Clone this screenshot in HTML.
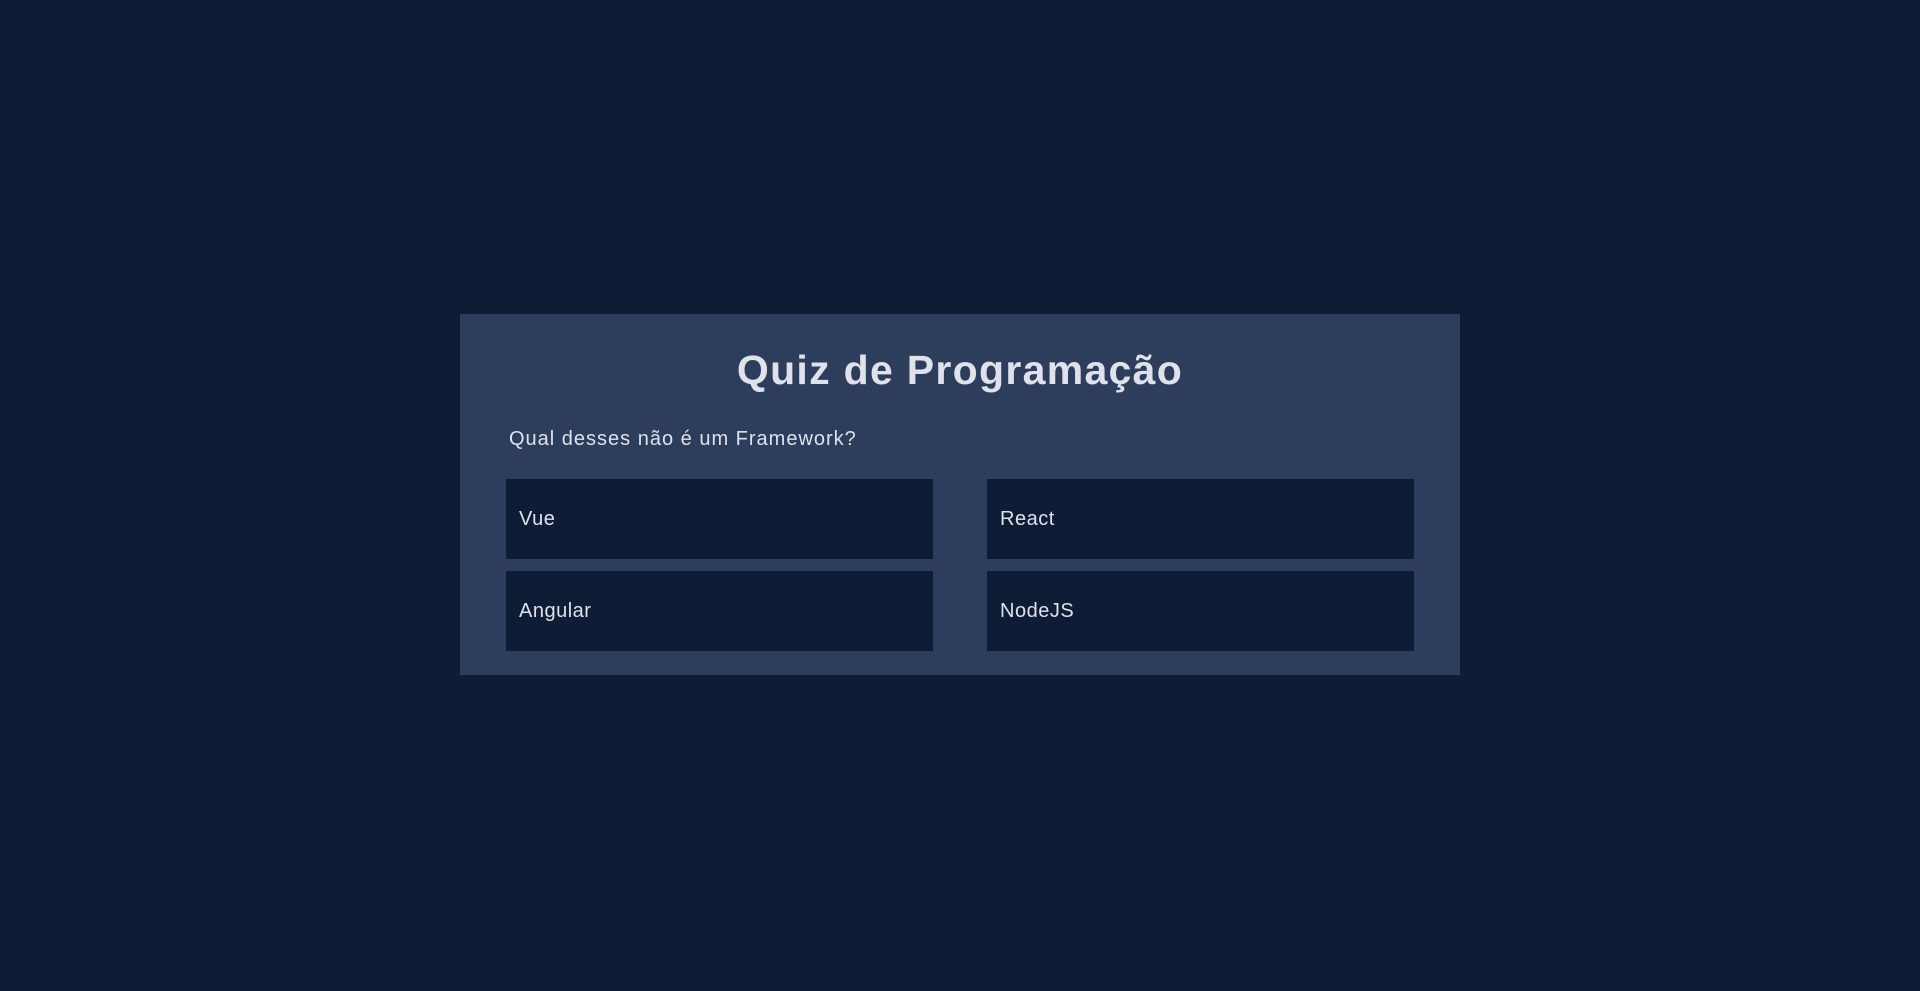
<!DOCTYPE html>
<html><head><meta charset="utf-8"><style>
html,body{margin:0;padding:0;width:1920px;height:991px;background:#0e1c36;overflow:hidden;font-family:"Liberation Sans",sans-serif;color:#dfe1eb}
.card{position:absolute;left:460px;top:314px;width:1000px;height:361px;background:#2d3d5c}
h1{position:absolute;left:0;width:1000px;top:28px;margin:0;text-align:center;font-size:41px;font-weight:bold;line-height:56px;letter-spacing:1.3px}
.q{position:absolute;left:49px;top:112px;font-size:20px;line-height:26px;letter-spacing:1px}
.b{position:absolute;width:427px;height:80px;background:#0e1c36;font-size:20px;line-height:80px;box-sizing:border-box;padding-left:13px;letter-spacing:0.5px}
</style></head><body>
<div class="card">
<h1>Quiz de Programação</h1>
<div class="q">Qual desses não é um Framework?</div>
<div class="b" style="left:46px;top:165px">Vue</div>
<div class="b" style="left:527px;top:165px">React</div>
<div class="b" style="left:46px;top:257px">Angular</div>
<div class="b" style="left:527px;top:257px">NodeJS</div>
</div>
</body></html>
